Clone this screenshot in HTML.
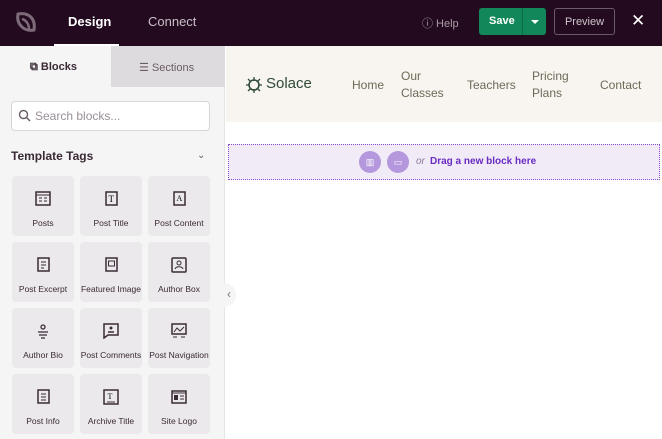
<!DOCTYPE html>
<html><head><meta charset="utf-8"><style>
*{box-sizing:border-box;margin:0;padding:0}
body{width:662px;height:439px;overflow:hidden;font-family:"Liberation Sans",sans-serif;background:#fff;position:relative}
.top{position:absolute;left:0;top:0;width:662px;height:46px;background:#230a1e}
.abs{position:absolute}
.side{position:absolute;left:0;top:46px;width:225px;height:393px;background:#f5f5f5;border-right:1px solid #e6e6e6}
.cell{position:absolute;width:62px;height:60px;background:#ebe9eb;border-radius:4px;text-align:center;font-size:8.5px;color:#3a2a36}
.cell svg{position:absolute;left:23px;top:15px}
.cell span{position:absolute;left:0;right:0;top:42px;white-space:nowrap}
.nav{position:absolute;font-size:12px;color:#6b6b58;line-height:17px}
</style></head><body>
<div class="top">
 <svg class="abs" style="left:14px;top:10px" width="24" height="24" viewBox="0 0 24 24"><path d="M4 4 C14 2 22 8 20 20 C10 22 2 14 4 4Z" fill="none" stroke="#7d6b79" stroke-width="3"/><path d="M8 9 C12 10 15 14 15 19" fill="none" stroke="#7d6b79" stroke-width="2.5"/></svg>
 <div class="abs" style="left:68px;top:14px;color:#fff;font-size:13px;font-weight:bold">Design</div>
 <div class="abs" style="left:54px;top:44px;width:65px;height:2px;background:#fff"></div>
 <div class="abs" style="left:148px;top:14px;color:#c9c0c7;font-size:13px">Connect</div>
 <div class="abs" style="left:422px;top:15px;color:#a89ea6;font-size:11px">&#9432; Help</div>
 <div class="abs" style="left:479px;top:8px;width:67px;height:27px;background:#12875a;border-radius:3px"></div>
 <div class="abs" style="left:522px;top:8px;width:1px;height:27px;background:#0b6c47"></div>
 <div class="abs" style="left:489px;top:15px;color:#fff;font-size:11px;font-weight:bold">Save</div>
 <div class="abs" style="left:531px;top:20px;width:0;height:0;border-left:4px solid transparent;border-right:4px solid transparent;border-top:4px solid #fff"></div>
 <div class="abs" style="left:554px;top:8px;width:61px;height:27px;border:1px solid #6b5b67;border-radius:3px;color:#cfc6cd;font-size:11px;text-align:center;line-height:26px">Preview</div>
 <div class="abs" style="left:631px;top:11px;color:#fff;font-size:17px">&#x2715;</div>
</div>
<div class="side">
 <div class="abs" style="left:111px;top:0;width:114px;height:41px;background:#dedbde"></div>
 <div class="abs" style="left:30px;top:15px;font-size:11px;color:#3a2a36;font-weight:bold">&#x29C9; Blocks</div>
 <div class="abs" style="left:139px;top:15px;font-size:11px;color:#6a5c66">&#x2630; Sections</div>
 <div class="abs" style="left:11px;top:55px;width:199px;height:30px;background:#fff;border:1px solid #d8d5d8;border-radius:4px"></div>
 <svg class="abs" style="left:18px;top:63px" width="13" height="13"><circle cx="5.5" cy="5.5" r="4" fill="none" stroke="#6a5c66" stroke-width="1.4"/><path d="M8.5 8.5 L12 12" stroke="#6a5c66" stroke-width="1.5"/></svg>
 <div class="abs" style="left:35px;top:63px;font-size:12px;color:#9a9098">Search blocks...</div>
 <div class="abs" style="left:11px;top:103px;font-size:12px;color:#3a2a36;font-weight:bold">Template Tags</div>
 <div class="abs" style="left:197px;top:104px;font-size:10px;color:#6a5c66">&#x2304;</div>
</div>
<div style="position:absolute;left:0;top:46px">
<div class="cell" style="left:12px;top:130px"><svg width="16" height="16"><rect x="1" y="1" width="14" height="13" fill="none" stroke="#3a2a36" stroke-width="1.5"/><path d="M1 4h14M4 7h3M9 7h3M4 10h3M9 10h3" stroke="#3a2a36"/></svg><span>Posts</span></div>
<div class="cell" style="left:80px;top:130px"><svg width="16" height="16"><rect x="3" y="1" width="11" height="13" fill="none" stroke="#3a2a36" stroke-width="1.5"/><text x="5.5" y="11" font-size="9" font-family="Liberation Serif">T</text></svg><span>Post Title</span></div>
<div class="cell" style="left:148px;top:130px"><svg width="16" height="16"><rect x="3" y="1" width="11" height="13" fill="none" stroke="#3a2a36" stroke-width="1.5"/><text x="5.5" y="10" font-size="8" font-family="Liberation Serif">A</text></svg><span>Post Content</span></div>
<div class="cell" style="left:12px;top:196px"><svg width="16" height="16"><rect x="3" y="1" width="11" height="13" fill="none" stroke="#3a2a36" stroke-width="1.5"/><path d="M6 5h5M6 8h5M6 11h3" stroke="#3a2a36"/></svg><span>Post Excerpt</span></div>
<div class="cell" style="left:80px;top:196px"><svg width="16" height="16"><rect x="3" y="1" width="11" height="13" fill="none" stroke="#3a2a36" stroke-width="1.5"/><rect x="5.5" y="4" width="6" height="5" fill="none" stroke="#3a2a36"/></svg><span>Featured Image</span></div>
<div class="cell" style="left:148px;top:196px"><svg width="16" height="16"><rect x="1" y="1" width="14" height="14" rx="1" fill="none" stroke="#3a2a36" stroke-width="1.5"/><circle cx="8" cy="6" r="2" fill="none" stroke="#3a2a36"/><path d="M4 12c1-3 7-3 8 0" fill="none" stroke="#3a2a36"/></svg><span>Author Box</span></div>
<div class="cell" style="left:12px;top:262px"><svg width="16" height="16"><circle cx="8" cy="4" r="2" fill="none" stroke="#3a2a36" stroke-width="1.3"/><path d="M3 9h10M4 12h8M6 15h4" stroke="#3a2a36" stroke-width="1.3"/></svg><span>Author Bio</span></div>
<div class="cell" style="left:80px;top:262px"><svg width="16" height="16"><path d="M1 1h14v11H5l-4 3z" fill="none" stroke="#3a2a36" stroke-width="1.5"/><circle cx="8" cy="5" r="1.5" fill="#3a2a36"/><path d="M5 9h6" stroke="#3a2a36" stroke-width="1.5"/></svg><span>Post Comments</span></div>
<div class="cell" style="left:148px;top:262px"><svg width="16" height="16"><rect x="1" y="1" width="14" height="10" fill="none" stroke="#3a2a36" stroke-width="1.5"/><path d="M3 9l3-4 3 3 4-4M2 14h4M10 14h4" fill="none" stroke="#3a2a36"/></svg><span>Post Navigation</span></div>
<div class="cell" style="left:12px;top:328px"><svg width="16" height="16"><rect x="3" y="1" width="11" height="13" fill="none" stroke="#3a2a36" stroke-width="1.5"/><path d="M6 5h5M6 8h5M6 11h5" stroke="#3a2a36"/></svg><span>Post Info</span></div>
<div class="cell" style="left:80px;top:328px"><svg width="16" height="16"><rect x="1" y="1" width="14" height="14" fill="none" stroke="#3a2a36" stroke-width="1.5"/><text x="4.5" y="10" font-size="8" font-family="Liberation Serif">T</text><path d="M4 13h8" stroke="#3a2a36"/></svg><span>Archive Title</span></div>
<div class="cell" style="left:148px;top:328px"><svg width="16" height="16"><rect x="1" y="2" width="14" height="12" fill="none" stroke="#3a2a36" stroke-width="1.5"/><rect x="3" y="6" width="4" height="5" fill="#3a2a36"/><path d="M9 7h4M9 10h4M1 4h14" stroke="#3a2a36"/></svg><span>Site Logo</span></div>
</div>
<div class="abs" style="left:222px;top:283px;width:14px;height:24px;background:#f5f5f5;border-radius:0 12px 12px 0;color:#777;font-size:12px;line-height:22px;text-align:center">&#x2039;</div>
<div class="abs" style="left:226px;top:46px;width:436px;height:76px;background:#f8f4ef"></div>
<svg class="abs" style="left:245px;top:76px" width="18" height="18"><circle cx="9" cy="9" r="5" fill="none" stroke="#2f4a36" stroke-width="1.5"/><path d="M9 1v4M9 13v4M1 9h4M13 9h4M3 3l3 3M12 12l3 3M15 3l-3 3M3 15l3-3" stroke="#2f4a36" stroke-width="1.3"/></svg>
<div class="abs" style="left:266px;top:75px;font-size:15px;color:#2f4a36">Solace</div>
<div class="nav" style="left:352px;top:77px">Home</div>
<div class="nav" style="left:401px;top:68px">Our<br>Classes</div>
<div class="nav" style="left:467px;top:77px">Teachers</div>
<div class="nav" style="left:532px;top:68px">Pricing<br>Plans</div>
<div class="nav" style="left:600px;top:77px">Contact</div>
<div class="abs" style="left:228px;top:144px;width:432px;height:36px;background:#f1ebf8;border:1px dotted #8a4fd0"></div>
<div class="abs" style="left:359px;top:151px;width:22px;height:22px;border-radius:50%;background:#b497dc;color:#fff;font-size:9px;text-align:center;line-height:22px">&#x25A5;</div>
<div class="abs" style="left:387px;top:151px;width:22px;height:22px;border-radius:50%;background:#b497dc;color:#fff;font-size:9px;text-align:center;line-height:22px">&#x25AD;</div>
<div class="abs" style="left:416px;top:156px;font-size:10px;color:#8a7a98;font-style:italic">or</div>
<div class="abs" style="left:430px;top:156px;font-size:10px;color:#6a2bc0;font-weight:bold">Drag a new block here</div>
</body></html>
